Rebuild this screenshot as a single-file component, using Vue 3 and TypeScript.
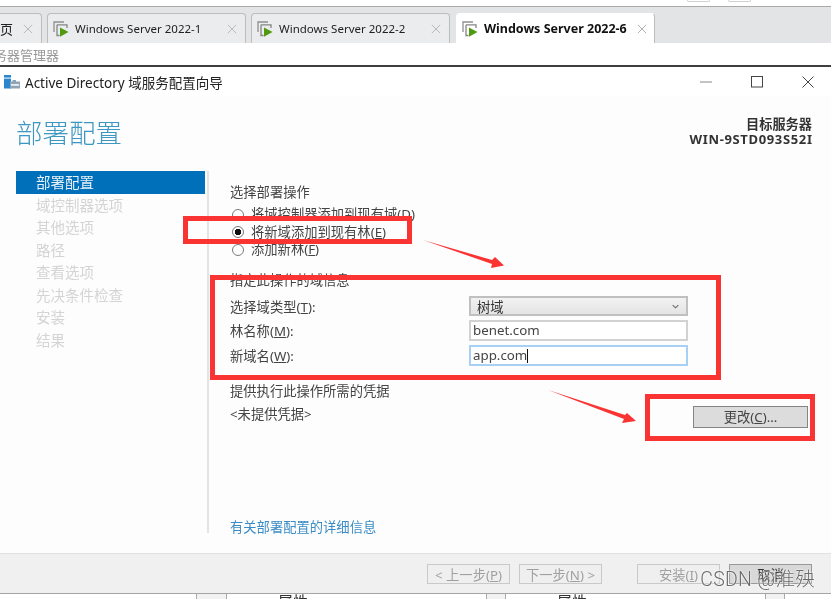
<script setup lang="ts">
interface Tab { label: string; active?: boolean }
const tabs: Tab[] = [
  { label: 'Windows Server 2022-1' },
  { label: 'Windows Server 2022-2' },
  { label: 'Windows Server 2022-6', active: true },
]
const steps: string[] = ['部署配置', '域控制器选项', '其他选项', '路径', '查看选项', '先决条件检查', '安装', '结果']
</script>

<template>
  <div class="page">
    <div class="top-gap"><span class="nub"></span><span class="nub"></span></div>
    <div class="tabstrip">
      <div class="tab first">
        <span class="tab-label">页</span>
        <svg class="tab-x" viewBox="0 0 12 12"><path d="M1 1 11 11M11 1 1 11" /></svg>
      </div>
      <div v-for="t in tabs" :key="t.label" class="tab" :class="{ active: t.active }">
        <svg class="vm-icon" viewBox="0 0 16 16">
          <path d="M1 11V1H11" fill="none" stroke="#8f8f8f" stroke-width="1.300" />
          <path d="M4 3.800H14V7M4 3.800V14.500H6.500" fill="none" stroke="#858585" stroke-width="1.300" />
          <path d="M7 6.500 15.500 11 7 15.800Z" fill="#4f9a10" />
        </svg>
        <span class="tab-label">{{ t.label }}</span>
        <svg class="tab-x" viewBox="0 0 12 12"><path d="M1 1 11 11M11 1 1 11" /></svg>
      </div>
    </div>
    <div class="subbar"><span>务器管理器</span></div>
    <div class="darkline"></div>

    <div class="titlebar">
      <svg class="ad-icon" viewBox="0 0 16 14">
        <rect x="0" y="0" width="7" height="13.500" fill="#2b86d0" />
        <rect x="0" y="2.500" width="7" height="1.200" fill="#d8ecfa" />
        <path d="M6 6.500H8.500V5H12V6.500H16V13.500H6Z" fill="#8fa5b5" />
        <rect x="7" y="9" width="8" height="1.800" fill="#e8eef2" />
      </svg>
      <span class="title-text">Active Directory 域服务配置向导</span>
      <div class="win-controls">
        <svg class="min" viewBox="0 0 12 12"><path d="M0 6H12" /></svg>
        <svg viewBox="0 0 12 12"><rect x="0.500" y="0.500" width="11" height="10.500" /></svg>
        <svg viewBox="0 0 12 12"><path d="M0.500 0.500 11.500 11.500M11.500 0.500 0.500 11.500" /></svg>
      </div>
    </div>

    <div class="wizard">
      <header class="wizard-head">
        <h1>部署配置</h1>
        <div class="target">
          <div>目标服务器</div>
          <div class="server">WIN-9STD093S52I</div>
        </div>
      </header>
      <div class="wizard-main">
        <nav class="steps">
          <div v-for="(s, i) in steps" :key="s" class="step" :class="{ current: i === 0 }">{{ s }}</div>
        </nav>
        <section class="content">
          <div class="heading">选择部署操作</div>
          <label class="radio r1"><i></i>将域控制器添加到现有域(<u>D</u>)</label>
          <label class="radio r2"><i class="on"></i>将新域添加到现有林(<u>E</u>)</label>
          <label class="radio r3"><i></i>添加新林(<u>F</u>)</label>
          <div class="heading h2">指定此操作的域信息</div>
          <div class="form">
            <div class="form-label">选择域类型(<u>T</u>):</div>
            <div class="select">
              <span>树域</span>
              <svg viewBox="0 0 8 5"><path d="M0.800 0.800 4 4 7.200 0.800" /></svg>
            </div>
            <div class="form-label">林名称(<u>M</u>):</div>
            <div class="input">benet.com</div>
            <div class="form-label">新域名(<u>W</u>):</div>
            <div class="input focus">app.com<b class="caret"></b></div>
          </div>
          <div class="cred">
            <div>
              <div class="heading">提供执行此操作所需的凭据</div>
              <div class="none">&lt;未提供凭据&gt;</div>
            </div>
            <button class="change">更改(<u>C</u>)...</button>
          </div>
          <a class="more">有关部署配置的详细信息</a>
        </section>
      </div>
    </div>

    <footer class="footer">
      <button class="fbtn off">&lt; 上一步(<u>P</u>)</button>
      <button class="fbtn off">下一步(<u>N</u>) &gt;</button>
      <button class="fbtn off install">安装(<u>I</u>)</button>
      <button class="fbtn cancel">取消</button>
    </footer>

    <div class="behind">
      <span class="cell c1"></span><span class="cell gray c2"></span><span class="cell c3">属性</span>
      <span class="cell gray c2"></span><span class="cell c4">属性</span><span class="cell gray c2"></span><span class="cell c5"></span>
    </div>

    <div class="mark m1"></div>
    <div class="mark m2"></div>
    <div class="mark m3"></div>
    <svg class="arrows" viewBox="0 0 831 599">
      <polygon points="423,240 492,260 495,257 504,265.500 491,268 492,264" fill="#fa3333" />
      <polygon points="548,390 625,415 627,413 636,421 622,423 624,419" fill="#fa3333" />
    </svg>
    <div class="watermark">CSDN @淮殃</div>
  </div>
</template>

<style>
html, body { margin: 0; padding: 0; background: #fff; overflow: hidden; }
</style>

<style scoped>
.page {
  position: relative;
  width: 831px;
  height: 599px;
  overflow: hidden;
  display: flex;
  flex-direction: column;
  background: #fff;
  font-family: "Noto Sans", "Noto Sans CJK SC", sans-serif;
  font-size: 13.300px;
  color: #333;
  filter: blur(0.4px);
}
u { text-underline-offset: 1px; }
.top-gap { height: 6px; flex: none; display: flex; gap: 18px; padding-left: 687px; }
.nub { width: 23px; height: 2px; box-sizing: border-box; border: 1px solid #d0d0d0; border-top: 0; border-radius: 0 0 2px 2px; }
.tabstrip {
  height: 37px;
  flex: none;
  box-sizing: border-box;
  display: flex;
  gap: 5px;
  align-items: flex-end;
  background: #e3e4e6;
  border-top: 1px solid #a9a9a9;
}
.tab {
  width: 199px;
  height: 30px;
  flex: none;
  box-sizing: border-box;
  display: flex;
  align-items: center;
  padding: 0 7px 0 5px;
  background: #ebeced;
  border: 1px solid #bdbdbd;
  border-bottom: 0;
  border-radius: 4px 4px 0 0;
  color: #222;
}
.tab.first { width: 42px; padding: 0; border-left: 0; border-radius: 0 4px 0 0; }
.tab.first .tab-label { width: 10px; flex: none; font-size: 13px; }
.tab.first .tab-x { margin-left: 13px; }
.tab.active { margin-left: 1px; background: #fff; border-color: #fff #bdbdbd #fff #fff; padding-right: 6px; }
.tab.active .tab-label { font-size: 12.500px; font-weight: 700; color: #111; }
.tab.active .tab-x { stroke: #a8a8a8; }
.vm-icon { width: 16px; height: 16px; flex: none; margin-right: 6px; }
.tab-label { flex: 1; white-space: nowrap; font-size: 11.500px; }
.tab-x { width: 10px; height: 10px; flex: none; fill: none; stroke: #b5b5b5; stroke-width: 1.100; margin-right: 1px; }
.subbar {
  height: 22px;
  flex: none;
  overflow: hidden;
  display: flex;
  align-items: center;
  color: #999;
  font-size: 13px;
}
.subbar span { margin-left: -6px; }
.darkline { height: 2px; flex: none; background: #3f3f3f; }
.titlebar {
  height: 29px;
  flex: none;
  display: flex;
  align-items: center;
  padding: 0 17px 0 4px;
  background: #fff;
}
.ad-icon { width: 16px; height: 14px; margin-right: 5px; }
.title-text { font-size: 13.500px; color: #222; }
.win-controls { margin-left: auto; display: flex; gap: 39px; }
.win-controls svg { width: 12px; height: 12px; fill: none; stroke: #444; stroke-width: 1; }
.win-controls .min { stroke: #888; }
.wizard { flex: 1; min-height: 0; display: flex; flex-direction: column; background: #fdfdfd; }
.wizard-head { height: 75px; flex: none; display: flex; justify-content: space-between; padding: 0 19px 0 16px; }
.wizard-head h1 { margin: 21px 0 0; font-size: 26.500px; line-height: 32px; font-weight: 300; color: #3c97c2; }
.target { margin-top: 21px; text-align: right; font-size: 13.200px; line-height: 15px; font-weight: 700; color: #333; }
.server { font-size: 13px; letter-spacing: 0.650px; margin-right: -0.650px; }
.wizard-main { flex: 1; min-height: 0; display: flex; padding-bottom: 20px; }
.steps { width: 189px; margin-left: 16px; flex: none; }
.step { height: 22.500px; line-height: 22.500px; padding-left: 20px; font-size: 14.500px; color: #d4d4d4; }
.step.current { background: #0070bb; color: #e6f1f8; }
.content {
  flex: 1;
  min-width: 0;
  margin-left: 2px;
  padding: 12px 23px 0 21px;
  border-left: 2px solid #e4e4e4;
  display: flex;
  flex-direction: column;
  align-items: stretch;
}
.heading { height: 18px; line-height: 18px; color: #444; }
.radio { height: 17.500px; line-height: 17.500px; display: flex; align-items: center; white-space: pre; color: #444; }
.radio i { width: 12px; height: 12px; margin: 0 7px 0 2px; box-sizing: border-box; flex: none; border: 1px solid #7a7a7a; border-radius: 50%; background: #fff; }
.radio i.on { background: radial-gradient(circle, #111 0 3px, #fff 3.500px); }
.r1 { margin-top: 5px; }
.h2 { margin-top: 12px; }
.form {
  display: grid;
  grid-template-columns: 239px 219px;
  grid-auto-rows: 21px;
  row-gap: 3.500px;
  align-items: center;
  margin-top: 7px;
}
.form-label { color: #444; }
.select {
  height: 20px;
  box-sizing: border-box;
  display: flex;
  align-items: center;
  justify-content: space-between;
  padding: 0 6px;
  border: 2px solid #c0c0c0;
  background: linear-gradient(#f2f2f2, #e4e4e4);
}
.select svg { width: 7px; height: 5px; fill: none; stroke: #666; stroke-width: 1.200; margin-right: 1px; }
.input {
  height: 21px;
  box-sizing: border-box;
  border: 2px solid #d2d2d2;
  background: #fff;
  padding: 0 2px;
  line-height: 17px;
  color: #444;
}
.input.focus { border-color: #a8d0f4; }
.caret { display: inline-block; width: 1px; height: 14px; background: #111; vertical-align: -3px; }
.cred { display: flex; justify-content: space-between; margin-top: 16px; }
.cred .none { margin-top: 5px; line-height: 18px; color: #444; }
.change {
  width: 115px;
  height: 22px;
  margin: 24px 0 0;
  padding: 0;
  font: inherit;
  color: #444;
  background: #dcdcdc;
  border: 1px solid #858585;
}
.more { margin-top: auto; margin-bottom: -3px; height: 18px; line-height: 18px; color: #3a8cc6; }
.footer {
  height: 40px;
  flex: none;
  box-sizing: border-box;
  display: flex;
  align-items: center;
  gap: 9px;
  padding: 0 19px 0 427px;
  background: #f0f0f0;
  border-top: 1px solid #e2e2e2;
}
.fbtn {
  width: 83px;
  height: 20px;
  padding: 0;
  font: inherit;
  background: #efefef;
  border: 1px solid #c9c9c9;
  color: #a0a0a0;
}
.install { margin-left: 26px; }
.cancel { background: #d8d8d8; border-color: #999; color: #333; }
.behind {
  height: 6px;
  flex: none;
  overflow: hidden;
  display: flex;
  border-top: 1px solid #a5a5a5;
  background: #fff;
  font-size: 15px;
  line-height: 15px;
  color: #333;
  box-sizing: border-box;
}
.cell { display: block; flex: none; height: 6px; }
.c1 { width: 196px; }
.gray { width: 31px; background: #f2f2f2; border-left: 1px solid #aaa; border-right: 1px solid #aaa; box-sizing: border-box; }
.c3, .c4 { width: 259px; padding-left: 51px; box-sizing: border-box; }
.c5 { flex: 1; }
.gray:nth-child(4), .gray:nth-child(6) { width: 20px; }
.mark { position: absolute; box-sizing: border-box; border: 5px solid #fa3333; }
.m1 { left: 183px; top: 216px; width: 229px; height: 28px; }
.m2 { left: 210px; top: 275px; width: 511px; height: 105px; }
.m3 { left: 645px; top: 394px; width: 170px; height: 47px; }
.arrows { position: absolute; left: 0; top: 0; width: 831px; height: 599px; pointer-events: none; }
.watermark {
  position: absolute;
  right: 16px;
  top: 569px;
  white-space: nowrap;
  font-family: Roboto, "Noto Sans CJK SC", sans-serif;
  font-size: 19.500px;
  line-height: 22px;
  font-weight: 300;
  letter-spacing: 0.300px;
  color: #6a6a6a;
  text-shadow: 0 0 2px #fff, 0 0 2px #fff;
}
</style>
